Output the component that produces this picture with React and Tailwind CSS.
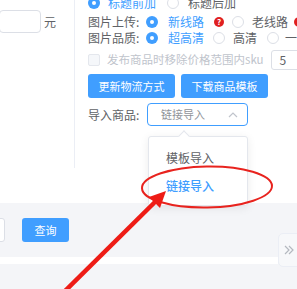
import React from "react";

const font = { fontFamily: '"Noto Sans CJK SC", "Noto Sans", sans-serif' };

const Radio = ({ checked, className = "" }) =>
  checked ? (
    <span className={`w-[12px] h-[12px] rounded-full bg-[#409eff] flex items-center justify-center shrink-0 ${className}`}>
      <span className="w-[4px] h-[4px] rounded-full bg-white" />
    </span>
  ) : (
    <span className={`block w-[12px] h-[12px] rounded-full border border-[#dcdfe6] bg-white shrink-0 ${className}`} />
  );

const Help = ({ className = "" }) => (
  <span className={`w-[10px] h-[10px] rounded-full bg-[#e02020] text-white text-[8px] leading-none font-bold flex items-center justify-center shrink-0 ${className}`}>
    ?
  </span>
);

const App = () => {
  return (
    <div
      className="relative w-[297px] h-[289px] overflow-hidden bg-[#f4f5f8] text-[#606266]"
      style={font}
    >
      {/* top white panel */}
      <div className="h-[203px] bg-white flex">
        <div className="w-[75px] h-[168px] border-r border-[#ebeef5] shrink-0 pt-[10px]">
          <div className="flex items-center">
            <div className="w-[42px] h-[23px] border border-[#dcdfe6] rounded-[4px] -ml-[1px]" />
            <span className="ml-[3px] text-[12px]">元</span>
          </div>
        </div>

        <div className="pl-[13px] -mt-[5px] flex flex-col text-[12px] whitespace-nowrap">
          <div className="h-[16px] flex items-center">
            <Radio checked />
            <span className="ml-[8px] text-[#409eff]">标题前加</span>
            <Radio className="ml-[11px]" />
            <span className="ml-[9px]">标题后加</span>
          </div>

          <div className="h-[16px] mt-[3px] flex items-center">
            <span className="w-[58px]">图片上传:</span>
            <Radio checked />
            <span className="ml-[10px] text-[#409eff]">新线路</span>
            <Help className="ml-[10px]" />
            <Radio className="ml-[8px]" />
            <span className="ml-[8px]">老线路</span>
            <Help className="ml-[6px]" />
          </div>

          <div className="h-[16px] flex items-center">
            <span className="w-[58px]">图片品质:</span>
            <Radio checked />
            <span className="ml-[10px] text-[#409eff]">超高清</span>
            <Radio className="ml-[9px]" />
            <span className="ml-[8px]">高清</span>
            <Radio className="ml-[10px]" />
            <span className="ml-[6px]">一</span>
          </div>

          <div className="h-[20px] mt-[4px] flex items-center">
            <span className="w-[12px] h-[12px] border border-[#e4e7ed] bg-[#f5f7fa] rounded-[2px]" />
            <span className="ml-[7px] text-[11.5px] text-[#c0c4cc]">发布商品时移除价格范围内sku</span>
            <span className="ml-[7px] w-[30px] h-[20px] border border-[#dcdfe6] rounded-[3px] flex items-center pl-[8px] text-[#606266]">
              5
            </span>
          </div>

          <div className="mt-[4px] flex gap-[6px]">
            <button className="w-[87px] h-[24px] rounded-[3px] bg-[#409eff] text-white text-[11px]">
              更新物流方式
            </button>
            <button className="w-[87px] h-[24px] rounded-[3px] bg-[#409eff] text-white text-[11px]">
              下载商品模板
            </button>
          </div>

          <div className="mt-[5px] flex items-center">
            <span className="w-[59px]">导入商品:</span>
            <div className="relative">
              <div className="w-[101px] h-[23px] border border-[#409eff] rounded-[4px] flex items-center justify-between pl-[13px] pr-[9px]">
                <span className="text-[11px] text-[#909399]">链接导入</span>
                <svg width="10" height="6" viewBox="0 0 10 6">
                  <path d="M1 5 L5 1 L9 5" fill="none" stroke="#c0c4cc" strokeWidth="1.2" />
                </svg>
              </div>
              {/* dropdown */}
              <div className="absolute left-[1px] top-[33px] w-[100px] h-[70px] bg-white border border-[#e4e7ed] rounded-[3px] shadow-[0_2px_10px_rgba(0,0,0,0.08)] pt-[7px]">
                <span className="absolute -top-[5px] left-[31px] w-[8px] h-[8px] bg-white border-l border-t border-[#e4e7ed] rotate-45" />
                <div className="h-[28px] flex items-center pl-[17px] text-[12px] text-[#606266]">模板导入</div>
                <div className="h-[28px] flex items-center pl-[17px] text-[12px] text-[#409eff] font-medium">链接导入</div>
              </div>
            </div>
          </div>
        </div>
      </div>

      {/* search bar */}
      <div className="h-[54px] flex items-center">
        <div className="w-[6px] h-[24px] bg-white border border-[#dcdfe6] rounded-r-[3px] -ml-[1px]" />
        <button className="ml-[17px] w-[47px] h-[24px] rounded-[3px] bg-[#409eff] text-white text-[11px]">
          查询
        </button>
      </div>

      <div className="h-[7px] w-[278px] bg-white" />

      {/* side toggle */}
      <div className="absolute left-[278px] top-[233px] w-[24px] h-[34px] bg-[#f7f8fa] border border-[#ebeef5] rounded-l-[5px] flex items-center pl-[4px]">
        <svg width="12" height="12" viewBox="0 0 12 12">
          <path d="M2 2 L6 6 L2 10 M6 2 L10 6 L6 10" fill="none" stroke="#b4b8bf" strokeWidth="1.2" />
        </svg>
      </div>

      {/* annotation */}
      <svg className="absolute inset-0 pointer-events-none" width="297" height="289" viewBox="0 0 297 289">
        <ellipse cx="207" cy="187" rx="65" ry="20.5" fill="none" stroke="#e8231e" strokeWidth="2" transform="rotate(-1 207 187)" />
        <line x1="64" y1="292" x2="156" y2="201" stroke="#ee1c16" strokeWidth="4.5" />
        <polygon points="166,191 149,197 160,208" fill="#ee1c16" />
      </svg>
    </div>
  );
};

export default App;
